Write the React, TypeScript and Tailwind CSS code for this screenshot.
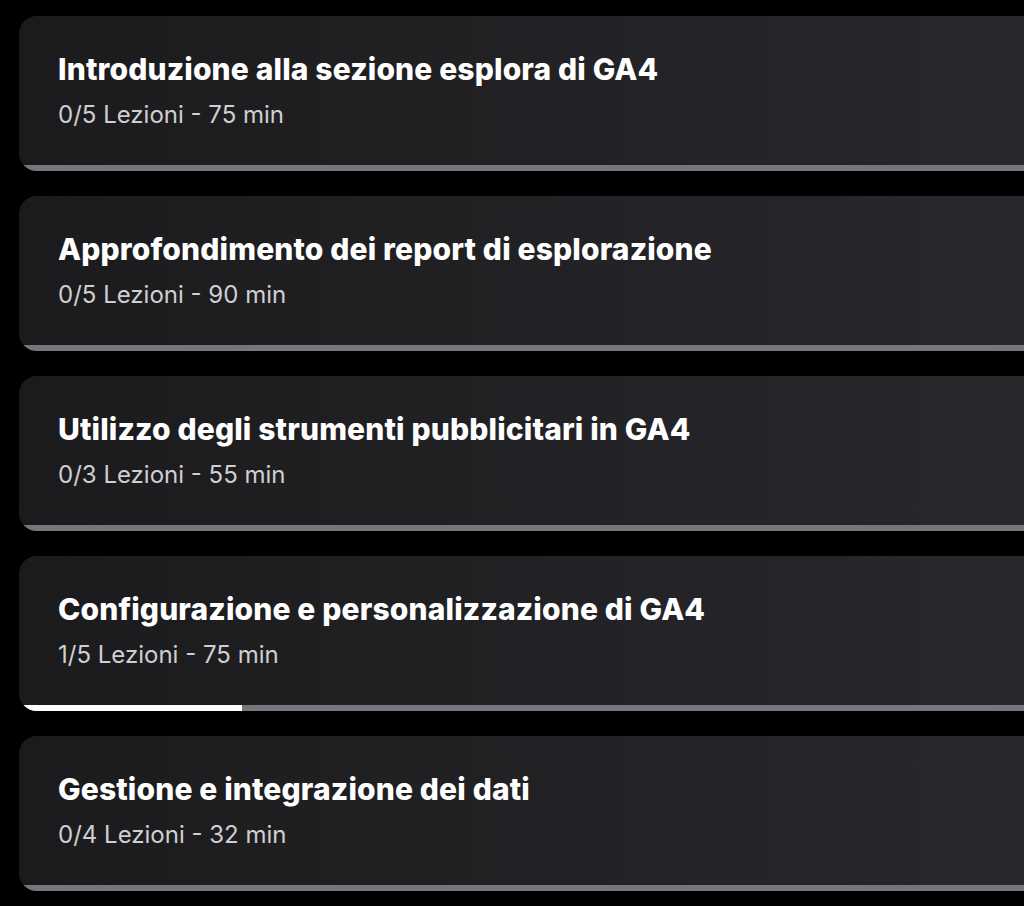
const modules = [
  { title: "Introduzione alla sezione esplora di GA4", done: 0, total: 5, minutes: 75 },
  { title: "Approfondimento dei report di esplorazione", done: 0, total: 5, minutes: 90 },
  { title: "Utilizzo degli strumenti pubblicitari in GA4", done: 0, total: 3, minutes: 55 },
  { title: "Configurazione e personalizzazione di GA4", done: 1, total: 5, minutes: 75 },
  { title: "Gestione e integrazione dei dati", done: 0, total: 4, minutes: 32 },
];

function ModuleCard({ title, done, total, minutes }: (typeof modules)[number]) {
  const pct = (done / total) * 100;
  return (
    <div className="relative h-[155px] w-[1115px] shrink-0 overflow-hidden rounded-[18px] bg-gradient-to-r from-[#1b1b1d] to-[#2a292e]">
      <div className="px-[39px] pt-[35px]">
        <h3 className="text-[30px] font-extrabold leading-[36px] tracking-[0.005em] text-white">{title}</h3>
        <p className="mt-[14px] text-[24px] leading-[28px] text-[#cfcfd2]">
          {done}/{total} Lezioni - {minutes} min
        </p>
      </div>
      <div className="absolute inset-x-0 bottom-0 h-[6px] bg-[#77767c]">
        <div className="h-full bg-white" style={{ width: `${pct}%` }} />
      </div>
    </div>
  );
}

export default function App() {
  return (
    <div
      className="flex h-[906px] w-[1024px] flex-col gap-[25px] overflow-hidden bg-black pl-[19px] pt-[16px]"
      style={{ fontFamily: "Inter, 'Noto Sans', sans-serif" }}
    >
      {modules.map((m) => (
        <ModuleCard key={m.title} {...m} />
      ))}
    </div>
  );
}
